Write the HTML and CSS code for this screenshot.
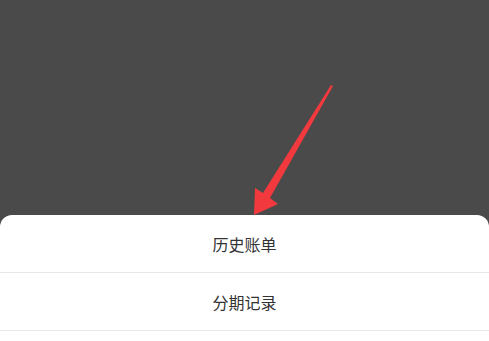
FILE: index.html
```html
<!DOCTYPE html>
<html lang="zh">
<head>
<meta charset="utf-8">
<link rel="stylesheet" href="styles.css">
</head>
<body>
<div class="screen">
  <div class="backdrop">
    <svg class="arrow" width="489" height="216" viewBox="0 0 489 216">
      <polygon points="333,86 270,198 278,204 254,215 255,188 263,193 331,85" fill="#f23a3e"/>
    </svg>
  </div>
  <div class="sheet">
    <div class="item">历史账单</div>
    <div class="item">分期记录</div>
    <div class="item rest"></div>
  </div>
</div>
</body>
</html>
```
FILE: styles.css
```css
html, body {
  margin: 0;
  padding: 0;
  width: 489px;
  height: 341px;
  overflow: hidden;
  background: #4a4a4a;
  font-family: "Noto Sans CJK SC", "Noto Sans", sans-serif;
}
.screen {
  position: relative;
  width: 489px;
  height: 341px;
  display: flex;
  flex-direction: column;
}
.backdrop {
  height: 215px;
  background: #4a4a4a;
  flex: none;
}
.arrow {
  position: absolute;
  left: 0;
  top: 0;
  z-index: 2;
}
.sheet {
  flex: 1;
  background: #ffffff;
  border-radius: 12px 12px 0 0;
  display: flex;
  flex-direction: column;
}
.item {
  height: 57px;
  display: flex;
  align-items: center;
  justify-content: center;
  font-size: 16px;
  color: #333333;
  border-bottom: 1px solid #e8e8e8;
  flex: none;
}
.item.rest {
  border-bottom: none;
  flex: 1;
}
```
